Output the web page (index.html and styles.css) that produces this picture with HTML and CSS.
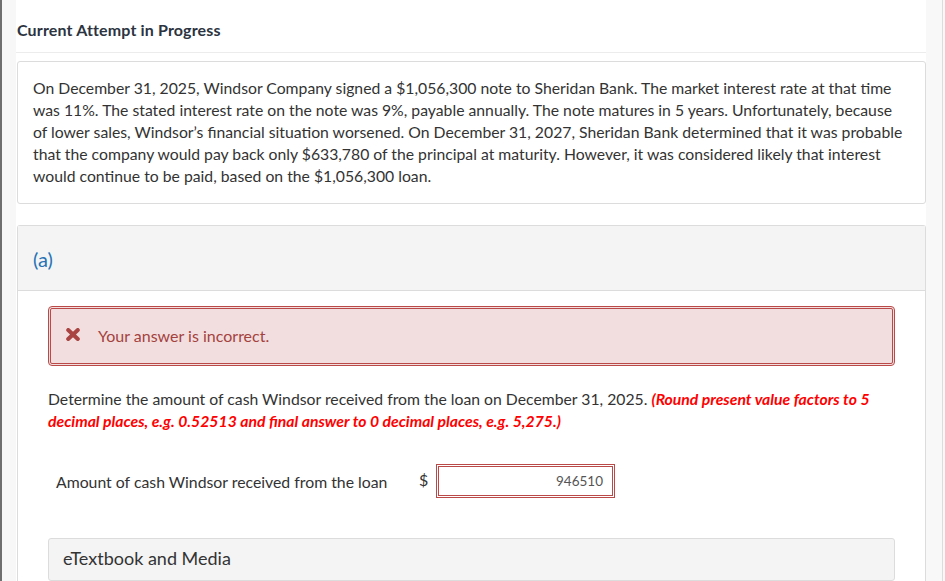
FILE: index.html
```html
<!DOCTYPE html>
<html lang="en">
<head>
<meta charset="utf-8">
<title>Current Attempt in Progress</title>
<link rel="stylesheet" href="styles.css">
</head>
<body>
<div class="frame">
  <div class="edge-left"></div>
  <div class="gutter"></div>
  <main class="main">
    <header class="page-head">
      <h1 class="page-title">Current Attempt in Progress</h1>
    </header>
    <section class="problem">
      <p class="problem-text">On December 31, 2025, Windsor Company signed a $1,056,300 note to Sheridan Bank. The market interest rate at that time was 11%. The stated interest rate on the note was 9%, payable annually. The note matures in 5 years. Unfortunately, because of lower sales, Windsor’s financial situation worsened. On December 31, 2027, Sheridan Bank determined that it was probable that the company would pay back only $633,780 of the principal at maturity. However, it was considered likely that interest would continue to be paid, based on the $1,056,300 loan.</p>
    </section>
    <section class="part">
      <div class="part-head">(a)</div>
      <div class="part-body">
        <div class="alert">
          <svg class="alert-icon" width="14" height="13" viewBox="0 0 14 13" aria-hidden="true">
            <path d="M2.2 2 L11.8 11 M11.8 2 L2.2 11" stroke="#a94442" stroke-width="4" stroke-linecap="round" fill="none"/>
          </svg>
          <span class="alert-text">Your answer is incorrect.</span>
        </div>
        <p class="question">Determine the amount of cash Windsor received from the loan on December 31, 2025. <em class="hint">(Round present value factors to 5 decimal places, e.g. 0.52513 and final answer to 0 decimal places, e.g. 5,275.)</em></p>
        <div class="answer-row">
          <span class="answer-label">Amount of cash Windsor received from the loan</span>
          <span class="currency">$</span>
          <span class="answer-input">946510</span>
        </div>
        <div class="media">eTextbook and Media</div>
      </div>
    </section>
  </main>
  <div class="scroll">
    <div class="scroll-track"></div>
    <div class="scroll-line"></div>
  </div>
</div>
</body>
</html>
```

FILE: styles.css
```css
* { box-sizing: border-box; }
html, body { margin: 0; padding: 0; }
body {
  font-family: Lato, "Open Sans", "Liberation Sans", sans-serif;
  color: #333;
  background: #f8f8f8;
}
.frame {
  display: flex;
  height: 581px;
  overflow: hidden;
}
.edge-left { width: 2px; background: #6f6f6f; flex: none; }
.gutter { width: 14px; background: #f7f7f7; flex: none; }
.main {
  width: 910px;
  flex: none;
  background: #fff;
  padding-left: 1px;
}
.page-head {
  padding: 20px 0 12px 1px;
  border-bottom: 1px solid #ececec;
  margin-left: -1px;
}
.page-title {
  margin: 0;
  font-size: 16px;
  letter-spacing: 0.15px;
  line-height: 20px;
  font-weight: 700;
  color: #2b3440;
}
.problem {
  margin-top: 8px;
  border: 1px solid #dcdcdc;
  border-radius: 3px;
  padding: 15px 15px 16px 15px;
}
.problem-text {
  margin: 0;
  font-size: 15.75px;
  line-height: 22px;
  color: #333;
}
.part {
  margin-top: 21px;
  border: 1px solid #dcdcdc;
  border-bottom: none;
  border-radius: 3px 3px 0 0;
  min-height: 400px;
}
.part-head {
  background: #f4f4f4;
  border-bottom: 1px solid #dcdcdc;
  padding: 21px 15px 19px 15px;
  height: 65px;
  font-size: 20px;
  line-height: 24px;
  color: #2672b4;
}
.part-body { padding: 15px 30px 0 30px; }
.alert {
  display: flex;
  align-items: center;
  height: 60px;
  border: 3px double #b94a48;
  border-radius: 4px;
  background: #f2dede;
  padding-left: 15px;
  padding-bottom: 1px;
}
.alert-icon { flex: none; margin-right: 18px; margin-top: -2px; }
.alert-text {
  font-size: 16px;
  color: #a4423f;
}
.question {
  margin: 22px 0 0 0;
  font-size: 15.75px;
  line-height: 22px;
  color: #333;
}
.hint {
  color: #ff0000;
  font-weight: 700;
  font-style: italic;
}
.answer-row {
  display: flex;
  align-items: center;
  margin-top: 32px;
  padding-left: 8px;
}
.answer-label {
  width: 363px;
  font-size: 15.8px;
  color: #333;
}
.currency {
  width: 17px;
  font-size: 16px;
  color: #333;
  margin-top: -4px;
}
.answer-input {
  width: 179px;
  height: 34px;
  border: 3px double #b94a48;
  display: flex;
  align-items: center;
  justify-content: flex-end;
  padding-right: 9px;
  font-size: 13.5px;
  color: #555;
}
.media {
  margin-top: 40px;
  height: 43px;
  border: 1px solid #dcdcdc;
  border-radius: 3px;
  background: #f4f4f4;
  padding: 0 14px 3px 14px;
  display: flex;
  align-items: center;
  font-size: 18px;
  color: #333;
}
.scroll {
  flex: 1;
  display: flex;
  background: #f8f8f8;
}
.scroll-track { flex: 1; }
.scroll-line { width: 1px; background: #dcdcdc; margin-right: 2px; }
```
